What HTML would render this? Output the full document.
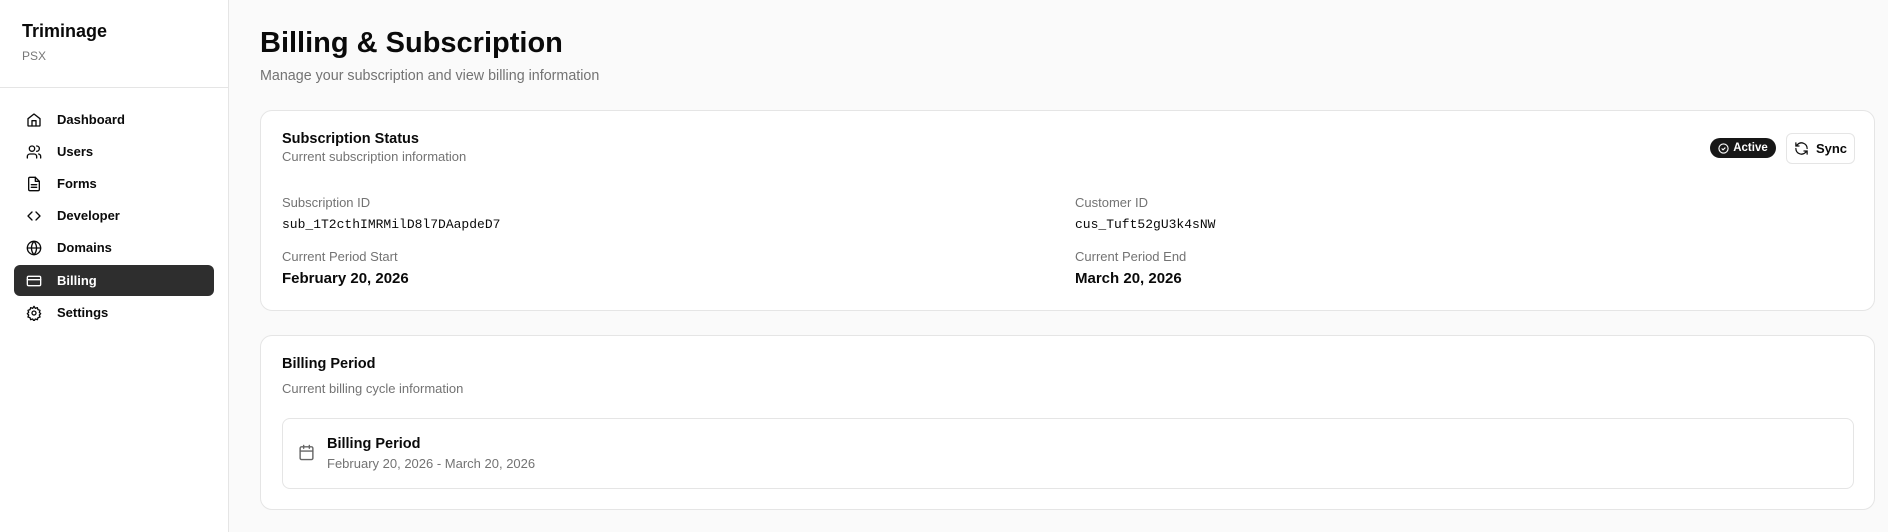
<!DOCTYPE html>
<html><head><meta charset="utf-8"><style>
*{box-sizing:border-box;margin:0;padding:0}
body{width:1888px;height:532px;overflow:hidden;background:#fafafa;font-family:"Liberation Sans",sans-serif;color:#0a0a0a;position:relative}
.side{position:absolute;left:0;top:0;width:229px;height:532px;background:#fff;border-right:1px solid #e5e5e5}
.brand{position:absolute;left:22px;top:21px;font-size:18px;font-weight:bold}
.org{position:absolute;left:22px;top:49px;font-size:12px;color:#777}
.hr{position:absolute;left:0;top:87px;width:229px;border-top:1px solid #e5e5e5}
.nav{position:absolute;left:14px;width:200px;height:31px;border-radius:6px;font-size:13px;font-weight:600;display:flex;align-items:center;padding-left:12px}
.nav svg{width:16px;height:16px;margin-right:15px;fill:none;stroke:currentColor;stroke-width:2;stroke-linecap:round;stroke-linejoin:round}
.nav.act{background:#2e2e2e;color:#fff}
h1{position:absolute;left:260px;top:27px;font-size:29px;font-weight:bold}
.sub{position:absolute;left:260px;top:68px;font-size:14.3px;color:#737373}
.card{position:absolute;left:260px;width:1615px;background:#fff;border:1px solid #e5e5e5;border-radius:12px}
.t{position:absolute;font-size:14.5px;font-weight:600}
.d{position:absolute;font-size:13px;color:#737373}
.m{position:absolute;font-family:"Liberation Mono",monospace;font-size:13px}
.b{position:absolute;font-size:15px;font-weight:bold}
</style></head><body>
<div class="side">
<div class="brand">Triminage</div><div class="org">PSX</div><div class="hr"></div>
<div class="nav" style="top:104px"><svg viewBox="0 0 24 24"><path d="M3 10l9-7 9 7v10a1 1 0 0 1-1 1H4a1 1 0 0 1-1-1z"/><path d="M9 21v-8h6v8"/></svg>Dashboard</div>
<div class="nav" style="top:136px"><svg viewBox="0 0 24 24"><circle cx="9" cy="7" r="4"/><path d="M2 21v-2a4 4 0 0 1 4-4h6a4 4 0 0 1 4 4v2M16 3a4 4 0 0 1 0 8M22 21v-2a4 4 0 0 0-3-4"/></svg>Users</div>
<div class="nav" style="top:168px"><svg viewBox="0 0 24 24"><path d="M14 2H6a2 2 0 0 0-2 2v16a2 2 0 0 0 2 2h12a2 2 0 0 0 2-2V8z"/><path d="M14 2v6h6M8 13h8M8 17h8"/></svg>Forms</div>
<div class="nav" style="top:200px"><svg viewBox="0 0 24 24"><path d="M9 6l-6 6 6 6M15 6l6 6-6 6"/></svg>Developer</div>
<div class="nav" style="top:232px"><svg viewBox="0 0 24 24"><circle cx="12" cy="12" r="10"/><path d="M2 12h20M12 2a15 15 0 0 1 0 20M12 2a15 15 0 0 0 0 20"/></svg>Domains</div>
<div class="nav act" style="top:265px"><svg viewBox="0 0 24 24"><rect x="2" y="5" width="20" height="14" rx="2"/><path d="M2 10h20"/></svg>Billing</div>
<div class="nav" style="top:297px"><svg viewBox="0 0 24 24"><circle cx="12" cy="12" r="3"/><path d="M12 2l2 3 3-1 1 3 3 1-1 3 2 2-2 2 1 3-3 1-1 3-3-1-2 3-2-3-3 1-1-3-3-1 1-3-2-2 2-2-1-3 3-1 1-3 3 1z"/></svg>Settings</div>
</div>
<h1>Billing &amp; Subscription</h1>
<div class="sub">Manage your subscription and view billing information</div>
<div class="card" style="top:110px;height:201px">
<div class="t" style="left:21px;top:20px">Subscription Status</div>
<div class="d" style="left:21px;top:38px">Current subscription information</div>
<div style="position:absolute;left:1449px;top:27px;width:66px;height:20px;border-radius:10px;background:#171717;color:#fff;font-size:11.5px;font-weight:bold;display:flex;align-items:center;justify-content:center;gap:4px;line-height:20px"><svg width="11" height="11" viewBox="0 0 24 24" fill="none" stroke="#fff" stroke-width="2.5"><circle cx="12" cy="12" r="10"/><path d="M8 12l3 3 5-5"/></svg><span>Active</span></div>
<div style="position:absolute;left:1525px;top:22px;width:69px;height:31px;border:1px solid #e5e5e5;border-radius:6px;font-size:13px;font-weight:600;display:flex;align-items:center;justify-content:center;gap:7px"><svg width="15" height="15" viewBox="0 0 24 24" fill="none" stroke="#111" stroke-width="2" stroke-linecap="round"><path d="M21 12a9 9 0 0 0-15.5-6.2L3 8M3 3v5h5M3 12a9 9 0 0 0 15.5 6.2L21 16M21 21v-5h-5"/></svg>Sync</div>
<div class="d" style="left:21px;top:84px">Subscription ID</div>
<div class="m" style="left:21px;top:106px">sub_1T2cthIMRMilD8l7DAapdeD7</div>
<div class="d" style="left:814px;top:84px">Customer ID</div>
<div class="m" style="left:814px;top:106px">cus_Tuft52gU3k4sNW</div>
<div class="d" style="left:21px;top:138px">Current Period Start</div>
<div class="b" style="left:21px;top:159px">February 20, 2026</div>
<div class="d" style="left:814px;top:138px">Current Period End</div>
<div class="b" style="left:814px;top:159px">March 20, 2026</div>
</div>
<div class="card" style="top:335px;height:175px">
<div class="t" style="left:21px;top:20px">Billing Period</div>
<div class="d" style="left:21px;top:45px">Current billing cycle information</div>
<div style="position:absolute;left:21px;top:82px;width:1572px;height:71px;border:1px solid #e5e5e5;border-radius:8px">
<svg style="position:absolute;left:15px;top:25px" width="17" height="17" viewBox="0 0 24 24" fill="none" stroke="#666" stroke-width="2" stroke-linecap="round"><rect x="3" y="4" width="18" height="18" rx="2"/><path d="M16 2v4M8 2v4M3 10h18"/></svg>
<div class="t" style="left:44px;top:17px">Billing Period</div>
<div class="d" style="left:44px;top:37px">February 20, 2026 - March 20, 2026</div>
</div></div>
</body></html>
